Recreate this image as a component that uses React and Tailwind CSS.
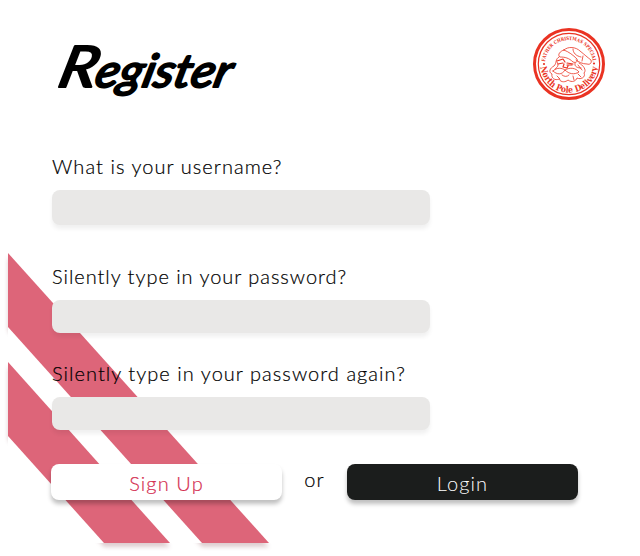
const ink = '"Lato", "Open Sans", sans-serif';

function Stripes() {
  return (
    <svg className="absolute left-0 top-0 h-[556px] w-[640px]" viewBox="0 0 640 556" aria-hidden="true">
      <defs>
        <filter id="soft" x="-20%" y="-20%" width="140%" height="140%">
          <feGaussianBlur stdDeviation="2" />
        </filter>
        <clipPath id="outer">
          <path d="M0 240H8V543H640V556H0Z" />
        </clipPath>
      </defs>
      <g clipPath="url(#outer)">
        <g filter="url(#soft)" transform="translate(0 4)" fill="#7c3a44" opacity=".25">
          <path d="M8 253L269 543H202L8 327Z" />
          <path d="M8 362L170 543H104L8 436Z" />
        </g>
      </g>
      <g fill="#dd6579">
        <path d="M8 253L269 543H202L8 327Z" />
        <path d="M8 362L170 543H104L8 436Z" />
      </g>
    </svg>
  );
}

function Title() {
  return (
    <h1 className="mt-[4px] h-[84px] w-[200px]">
      <svg className="h-[84px] w-[200px] overflow-visible" viewBox="0 0 200 84" stroke="#000" strokeWidth="2.2" strokeLinejoin="round">
        <g className="font-['Lato',sans-serif] italic" fontWeight="400" transform="translate(0 55) skewX(-14)">
          <text fontSize="57" x="4" textLength="38" lengthAdjust="spacingAndGlyphs">R</text>
          <text fontSize="46" x="41" textLength="136" lengthAdjust="spacingAndGlyphs">egister</text>
        </g>
      </svg>
    </h1>
  );
}

function Seal() {
  return (
    <svg className="h-[72px] w-[72px]" viewBox="0 0 72 72" fill="none" stroke="#ea3323">
      <defs>
        <path id="top" d="M12 36A24 24 0 0 1 60 36" />
        <path id="bottom" d="M7.3 36A28.7 28.7 0 0 0 64.7 36" />
      </defs>
      <circle cx="36" cy="36" r="34.5" strokeWidth="3" />
      <circle cx="36" cy="36" r="30.7" strokeWidth="1.2" />
      <g fill="#ea3323" stroke="none" fontWeight="700" className="font-['DejaVu_Serif',serif]">
        <text fontSize="4.8" textAnchor="middle">
          <textPath href="#top" startOffset="50%" textLength="70" lengthAdjust="spacingAndGlyphs">FATHER CHRISTMAS SPECIAL</textPath>
        </text>
        <text fontSize="8.8" textAnchor="middle">
          <textPath href="#bottom" startOffset="50%" textLength="84" lengthAdjust="spacingAndGlyphs">North Pole Delivery</textPath>
        </text>
        <circle cx="11" cy="36" r="1.1" />
        <circle cx="61" cy="35.5" r="1.1" />
      </g>
      <g strokeWidth=".8" strokeLinecap="round" strokeLinejoin="round">
        <path d="M31 22C35 18 43 19 47 23C52 27 54 29 58 32C59 35 57 37 54 36C49 36 46 34 43 32" />
        <path d="M31 22C36 24 40 27 44 31C45 34 43 35 40 34C36 30 32 29 27 29C24 27 27 23 31 22Z" />
        <path d="M40 21C40 25 43 28 48 29M50 28L49 33" />
        <path d="M26 29C22 31 24 35 21 38C17 40 15 44 19 46C18 50 22 53 26 51C28 55 33 54 35 52C39 55 43 53 44 50C48 52 53 49 51 45C54 42 50 37 46 35" />
        <path strokeWidth="1.2" d="M24 33L30 31L32 34M34 35L40 36M25 36L30 35M34 37H39M31 36L30 39L34 40L35 38" />
        <path d="M20 43C24 39 29 40 32 42C37 39 43 40 46 44C41 47 36 46 32 42C29 47 24 47 20 43ZM29 47Q33 50 36 47" />
        <path d="M24 34C26 37 25 39 22 41M42 35C41 39 45 40 48 40M24 48L27 51M40 48L41 52M45 46L48 49M45 37L49 42" />
      </g>
    </svg>
  );
}

function Field({ label, className, inputClass, labelClass }) {
  return (
    <label className={className}>
      <span className={"block h-[29px] whitespace-nowrap text-[20px] leading-[28px] font-light [-webkit-text-stroke:0.2px_#000] " + labelClass}>{label}</span>
      <input className={"mt-[9px] block w-[378px] rounded-[8px] bg-[#e9e8e7] shadow-[0_4px_4px_rgba(0,0,0,0.06)] outline-none " + inputClass} />
    </label>
  );
}

export default function App() {
  return (
    <main className="relative h-[556px] w-[640px] overflow-hidden bg-white text-black" style={{ fontFamily: ink }}>
      <Stripes />
      <div className="relative flex flex-col pl-[52px] pt-[28px]">
        <header className="flex h-[124px] items-start justify-between pr-[35px]">
          <Title />
          <Seal />
        </header>
        <Field label="What is your username?" className="h-[110px]" inputClass="h-[35px]" labelClass="tracking-[1.05px]" />
        <Field label="Silently type in your password?" className="h-[97px]" inputClass="h-[33px]" labelClass="tracking-[0.96px]" />
        <Field label="Silently type in your password again?" className="h-[105px]" inputClass="h-[33px]" labelClass="tracking-[1.04px]" />
        <div className="-ml-px flex items-center text-[20px] font-light tracking-[1.1px]">
          <button className="h-[36px] w-[231px] rounded-[8px] bg-white pt-[2px] text-[#d42e51] shadow-[0_4px_4px_rgba(0,0,0,0.25)] [-webkit-text-stroke:0.2px_#d42e51]">Sign Up</button>
          <span className="w-[65px] pb-[6px] text-center [-webkit-text-stroke:0.2px_#000]">or</span>
          <button className="h-[36px] w-[231px] rounded-[8px] bg-[#1b1d1c] pt-[2px] text-white shadow-[0_4px_4px_rgba(0,0,0,0.25)]">Login</button>
        </div>
      </div>
    </main>
  );
}
